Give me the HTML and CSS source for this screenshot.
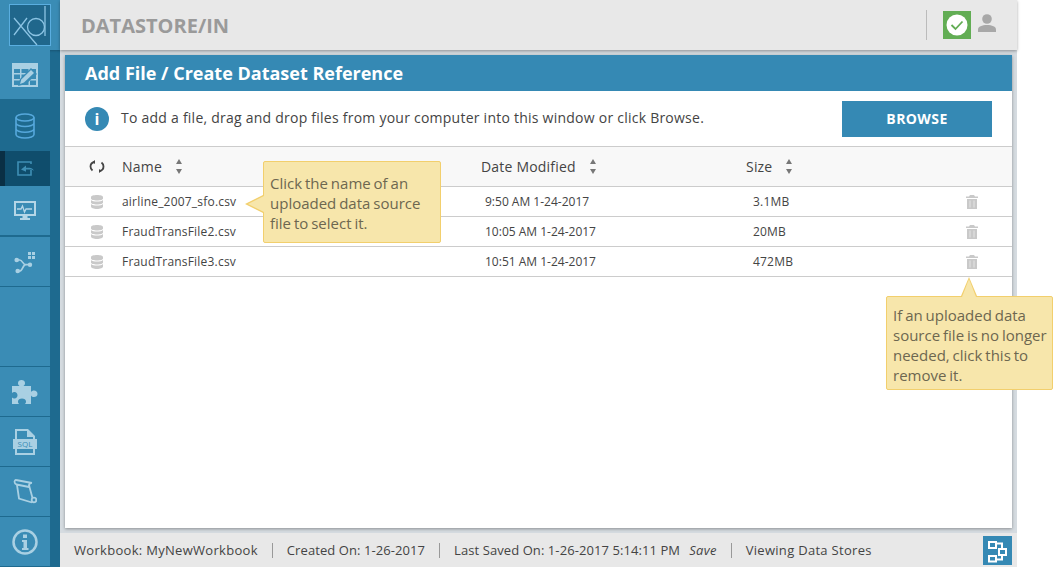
FILE: index.html
```html
<!DOCTYPE html>
<html>
<head>
    <meta charset="utf-8">
    <title>Datastore/In</title>
    <link rel="stylesheet" href="styles.css">
</head>
<body>
<div class="app">
    <!-- Barre de navigation -->
    <nav class="sidebar">
        <div class="logo">
            <div class="logo-box">
                <svg width="42" height="42" viewBox="0 0 42 42" fill="none" stroke="#8cc4e4" stroke-width="1.3">
                    <path d="M5 14 L28 41 M5 31 L18 14"/>
                    <circle cx="27" cy="23" r="8.500"/>
                    <path d="M36 2 V32"/>
                </svg>
            </div>
        </div>
        <div class="nav-list nav-top">
            <a class="nav-item">
                <svg width="26" height="26" viewBox="0 0 26 26">
                    <path fill="#a9d0e3" d="M0 1h26v24H0z"/>
                    <path fill="#3a8cb5" d="M2 7h6v4H2zM9.500 7h7v4h-7zM18 7h6v4h-6zM2 12.500h6V17H2zM9.500 12.500h7V17h-7zM18 12.500h6V17h-6zM2 18.500h6V23H2zM9.500 18.500h7V23h-7zM18 18.500h6V23h-6z"/>
                    <path fill="#3a8cb5" d="M6 24l2-7L19 6l6 6-11 10z"/>
                    <path fill="#a9d0e3" d="M8 22l1.300-4.500L19 8l3 3-10 9.500z"/>
                </svg>
            </a>
            <a class="nav-item nav-active">
                <svg width="20" height="26" viewBox="0 0 20 26" fill="none" stroke="#56a8dc" stroke-width="1.600">
                    <ellipse cx="10" cy="4.500" rx="9" ry="3.500"/>
                    <path d="M1 4.500v17c0 2 4 3.500 9 3.500s9-1.500 9-3.500v-17M1 10c0 2 4 3.500 9 3.500s9-1.500 9-3.500M1 15.800c0 2 4 3.500 9 3.500s9-1.500 9-3.500"/>
                </svg>
            </a>
            <a class="nav-sub">
                <svg width="17" height="15" viewBox="0 0 17 15" fill="none" stroke="#3f8fb5" stroke-width="1.600">
                    <path d="M14 9v5H1V1h13v2"/>
                    <path fill="#3f8fb5" stroke="none" d="M4 8.500l5-4v2.300h3.500c1.800 0 3.500 1 4.500 3-1.300-1-2.600-1.300-4.200-1.300H9v2.200z"/>
                </svg>
            </a>
            <a class="nav-item">
                <svg width="22" height="20" viewBox="0 0 22 20">
                    <path fill="#b5d6e7" d="M0 0h22v15H13.500v2H16v2H6v-2h2.500v-2H0z"/>
                    <path fill="#3a8cb5" d="M2 2h18v11H2z"/>
                    <path fill="none" stroke="#b5d6e7" stroke-width="1.300" d="M3 8h4l1.500-3 2 6 1.500-3h6"/>
                </svg>
            </a>
            <a class="nav-item">
                <svg width="22" height="24" viewBox="0 0 22 24" fill="#a9d0e3">
                    <circle cx="2.700" cy="10" r="2.300"/><circle cx="3.700" cy="21" r="2.300"/><circle cx="16" cy="14.700" r="2.200"/>
                    <path fill="none" stroke="#a9d0e3" stroke-width="1.700" d="M2.700 10h3c3 0 3 4.700 6 4.700h4M3.700 21h2c3 0 3-6.300 6-6.300"/>
                    <path d="M14 2h3v3h-3zM18 2h3v3h-3zM14 6h3v3h-3zM18 6h3v3h-3z"/>
                </svg>
            </a>
        </div>
        <div class="nav-list nav-bottom">
            <a class="nav-item">
                <svg width="26" height="24" viewBox="0 0 26 24" fill="#a9d0e3">
                    <path d="M0 6h7.500c-1-1-1.500-1.500-1.500-3 0-2 1.500-3 3.500-3S13 1 13 3c0 1.500-.5 2-1.500 3H19v6c1-1 1.500-1.500 3-1.500 2 0 3.500 1.500 3.500 3.500S24 17 22 17c-1.500 0-2-.5-3-1.500V24h-6c.8-1 1-1.500 1-2.500 0-2-1.800-3-4-3s-4 1-4 3c0 1 .2 1.500 1 2.500H0v-6.500c1 .8 1.500 1 2.500 1 1.800 0 3-1.300 3-3.200s-1.200-3.300-3-3.300c-1 0-1.500.2-2.500 1z"/>
                </svg>
            </a>
            <a class="nav-item">
                <svg width="24" height="26" viewBox="0 0 24 26">
                    <path fill="#a9d0e3" d="M2 0h13l7 7v19H2z"/>
                    <path fill="#3a8cb5" d="M4 2h10v6h6v2H4zM4 20h16v4H4z"/>
                    <path fill="#a9d0e3" d="M0 10h24v10H0z"/>
                    <text x="12" y="18" text-anchor="middle" class="sql-label">SQL</text>
                </svg>
            </a>
            <a class="nav-item">
                <svg width="24" height="26" viewBox="0 0 24 26" fill="none" stroke="#a9d0e3" stroke-width="1.800">
                    <path d="M3 1L19 4M3 1C1 1 1 5 3.500 5.500L16 8M17.500 4C16 5 16 7 16.500 8L19.500 19M4 6L6 19.500L19 23.500"/>
                    <circle cx="21" cy="21" r="2.300"/>
                </svg>
            </a>
            <a class="nav-item">
                <svg width="26" height="26" viewBox="0 0 26 26">
                    <circle cx="13" cy="13" r="11.500" fill="none" stroke="#a9d0e3" stroke-width="2.500"/>
                    <path fill="#a9d0e3" d="M11 5.500h4v3.500h-4zM10 11h5v8h1.500v2h-6.500v-2h1.500v-6h-1.500z"/>
                </svg>
            </a>
        </div>
    </nav>

    <div class="main">
        <!-- En-tête -->
        <header class="topbar">
            <h1 class="page-title">DATASTORE/IN</h1>
            <div class="topbar-right">
                <span class="status-ok">
                    <svg width="22" height="22" viewBox="0 0 22 22">
                        <circle cx="11" cy="11" r="10.500" fill="#fff"/>
                        <path d="M5.500 11l4 4 7-7.500" fill="none" stroke="#62ad54" stroke-width="1.800"/>
                    </svg>
                </span>
                <svg class="user-icon" width="18" height="18" viewBox="0 0 18 18" fill="#a8a8a8">
                    <circle cx="9" cy="5" r="4.800"/>
                    <path d="M0 18v-2.500C0 12.500 4 11 9 11s9 1.500 9 4.500V18z"/>
                </svg>
            </div>
        </header>

        <section class="panel">
            <div class="panel-title">Add File / Create Dataset Reference</div>
            <div class="intro">
                <span class="info-dot">i</span>
                <span class="intro-text">To add a file, drag and drop files from your computer into this window or click Browse.</span>
                <button class="browse">BROWSE</button>
            </div>

            <div class="row head">
                <span class="cell-icon">
                    <svg width="16" height="13" viewBox="0 0 16 13" fill="none" stroke="#444" stroke-width="1.800">
                        <path d="M5.500 2C3 2.500 1.500 4 1.500 6.500c0 1.500.7 3 2 4M10.500 11c2.500-.5 4-2 4-4.500 0-1.500-.7-3-2-4"/>
                        <path fill="#444" stroke="none" d="M6 0v4L3.500 2zM10 13V9l2.500 2z"/>
                    </svg>
                </span>
                <span class="sort">Name <i class="arrows"></i></span>
                <span class="sort">Date Modified <i class="arrows"></i></span>
                <span class="sort">Size <i class="arrows"></i></span>
                <span></span>
            </div>

            <div class="row">
                <span class="cell-icon"><svg class="db-icon" width="12" height="14"><use href="#db"/></svg></span>
                <span>airline_2007_sfo.csv</span>
                <span class="cell-date">9:50 AM 1-24-2017</span>
                <span class="cell-size">3.1MB</span>
                <span class="cell-trash"><svg width="12" height="14"><use href="#trash"/></svg></span>
            </div>
            <div class="row">
                <span class="cell-icon"><svg class="db-icon" width="12" height="14"><use href="#db"/></svg></span>
                <span>FraudTransFile2.csv</span>
                <span class="cell-date">10:05 AM 1-24-2017</span>
                <span class="cell-size">20MB</span>
                <span class="cell-trash"><svg width="12" height="14"><use href="#trash"/></svg></span>
            </div>
            <div class="row">
                <span class="cell-icon"><svg class="db-icon" width="12" height="14"><use href="#db"/></svg></span>
                <span>FraudTransFile3.csv</span>
                <span class="cell-date">10:51 AM 1-24-2017</span>
                <span class="cell-size">472MB</span>
                <span class="cell-trash"><svg width="12" height="14"><use href="#trash"/></svg></span>
            </div>
        </section>

        <!-- Barre d'état -->
        <footer class="statusbar">
            <span>Workbook: MyNewWorkbook</span>
            <span class="sep"></span>
            <span class="stat-tight">Created On: 1-26-2017</span>
            <span class="sep"></span>
            <span class="stat-tight">Last Saved On: 1-26-2017 5:14:11 PM</span>
            <em class="save">Save</em>
            <span class="sep"></span>
            <span>Viewing Data Stores</span>
            <span class="map-btn">
                <svg width="21" height="26" viewBox="0 0 21 26" fill="none" stroke="#fff" stroke-width="2">
                    <path d="M2 5h7v6H2zM12 12h7v6h-7zM2 19h7v5.500H2zM9 6.500h6v5.500M15 18v4.500H9"/>
                </svg>
            </span>
        </footer>
    </div>

    <!-- Bulles d'aide -->
    <div class="tip tip-left">Click the name of an uploaded data source file to select it.</div>
    <div class="tip tip-up">If an uploaded data source file is no longer needed, click this to remove it.</div>
</div>

<svg class="defs" width="0" height="0">
    <symbol id="db" viewBox="0 0 12 14">
        <path fill="#c9c9c9" d="M0 2c0-1.200 2.700-2 6-2s6 .8 6 2v1.500c0 1.200-2.700 2-6 2s-6-.8-6-2zM0 5c1 1 3.500 1.500 6 1.500S11 6 12 5v2.500c0 1.200-2.700 2-6 2s-6-.8-6-2zM0 9c1 1 3.500 1.500 6 1.500S11 10 12 9v2.500c0 1.500-2.700 2.500-6 2.500s-6-1-6-2.500z"/>
    </symbol>
    <symbol id="trash" viewBox="0 0 12 14">
        <path fill="#c9c9c9" d="M4 0h4l1 1.500h3V3H0V1.500h3zM1 4h10v10H1z"/>
        <path fill="#e6e6e6" d="M3.500 5.500h1v7h-1zM7.500 5.500h1v7h-1z"/>
    </symbol>
</svg>
</body>
</html>
```

FILE: styles.css
```css
* {
  box-sizing: border-box;
}

html, body {
  margin: 0;
  height: 100%;
  background-color: #fff;
  overflow: hidden;
}

body {
  font-family: "Open Sans", Arial, sans-serif;
  font-size: 13px;
  color: #444;
}

.defs {
  position: absolute;
}

.app {
  position: relative;
  display: flex;
  width: 1017px;
  height: 567px;
}

/* Barre de navigation */
.sidebar {
  display: flex;
  flex-direction: column;
  flex: 0 0 60px;
  height: 567px;
  background-color: #1e6a8f;
}

.logo {
  display: flex;
  justify-content: center;
  height: 50px;
  padding: 4px 0 0 0;
  background-color: #3a8cb5;
  box-shadow: 0 1px 2px rgba(0, 0, 0, 0.2);
}

.logo-box {
  width: 42px;
  height: 42px;
  border: 1px solid #5aaee0;
  background-color: #20678c;
  margin-left: -1px;
}

.logo-box svg {
  display: block;
  margin: -1px;
}

.nav-list {
  display: flex;
  flex-direction: column;
  width: 50px;
}

.nav-top {
  flex: 1;
  background-color: #3a8cb5;
}

.nav-bottom {
  border-top: 1px solid #1e6a8f;
}

.nav-item {
  display: flex;
  align-items: center;
  justify-content: center;
  height: 50px;
  background-color: #3a8cb5;
  border-bottom: 1px solid #1e6a8f;
}

.nav-active {
  background-color: #1e6a8f;
  border-bottom: none;
  height: 51px;
}

.nav-sub {
  display: flex;
  align-items: center;
  justify-content: center;
  height: 35px;
  background-color: #0f4d6c;
  border-left: 5px solid #0a2f44;
  padding-right: 5px;
}

.nav-list .nav-sub + .nav-item {
  height: 51px;
  border-bottom-width: 2px;
}

.sql-label {
  font-family: "Open Sans", Arial, sans-serif;
  font-size: 8px;
  fill: #3a8cb5;
}

/* Zone principale */
.main {
  display: flex;
  flex-direction: column;
  flex: 1;
  min-width: 0;
  background-color: #d5dbe0;
}

.topbar {
  display: flex;
  align-items: center;
  justify-content: space-between;
  flex: 0 0 50px;
  padding: 0 21px 0 21px;
  background-color: #e8e8e8;
  box-shadow: 0 1px 3px rgba(0, 0, 0, 0.35);
  position: relative;
}

.page-title {
  margin: 0;
  font-size: 20px;
  font-weight: 700;
  color: #9a9a9a;
}

.topbar-right {
  display: flex;
  align-items: center;
  height: 30px;
  border-left: 1px solid #bbb;
  padding-left: 16px;
}

.status-ok {
  display: flex;
  align-items: center;
  justify-content: center;
  width: 28px;
  height: 28px;
  background-color: #62ad54;
}

.user-icon {
  margin-left: 7px;
  margin-top: -4px;
}

.panel {
  flex: 1;
  margin: 5px 5px 5px 5px;
  background-color: #fff;
  box-shadow: 0 1px 3px rgba(0, 0, 0, 0.35);
}

.panel-title {
  height: 36px;
  padding: 0 20px;
  line-height: 36px;
  font-size: 18px;
  font-weight: 700;
  color: #fff;
  background-color: #3589b4;
}

.intro {
  display: flex;
  align-items: center;
  height: 56px;
  padding: 0 20px;
  border-bottom: 1px solid #ccc;
}

.info-dot {
  display: flex;
  align-items: center;
  justify-content: center;
  width: 24px;
  height: 24px;
  border-radius: 50%;
  background-color: #3589b4;
  color: #fff;
  font-weight: 700;
  font-size: 16px;
}

.intro-text {
  margin: 0 0 2px 12px;
  font-size: 14px;
  letter-spacing: 0.24px;
  color: #444;
}

.browse {
  margin-left: auto;
  width: 150px;
  height: 36px;
  border: none;
  background-color: #3589b4;
  color: #fff;
  font-family: "Open Sans", Arial, sans-serif;
  font-size: 14px;
  font-weight: 700;
  letter-spacing: 0.4px;
}

/* Tableau des fichiers */
.row {
  display: grid;
  grid-template-columns: 57px 359px 265px 1fr 80px;
  align-items: center;
  height: 30px;
  border-bottom: 1px solid #ccc;
  font-size: 12px;
  letter-spacing: 0.2px;
}

.head {
  height: 40px;
  font-size: 14px;
  background-color: #f8f8f8;
}

.cell-icon {
  display: flex;
  justify-content: center;
  padding-left: 7px;
}

.cell-date {
  padding-left: 4px;
  letter-spacing: 0;
}

.cell-size {
  padding-left: 7px;
}

.cell-trash {
  display: flex;
  justify-content: flex-end;
  padding-right: 34px;
}

.sort {
  display: flex;
  align-items: center;
}

.arrows {
  position: relative;
  width: 7px;
  height: 15px;
  margin-left: 14px;
}

.arrows::before, .arrows::after {
  content: "";
  position: absolute;
  left: 0;
  border-left: 3.500px solid transparent;
  border-right: 3.500px solid transparent;
}

.arrows::before {
  top: 0;
  border-bottom: 5px solid #777;
}

.arrows::after {
  bottom: 0;
  border-top: 5px solid #777;
}

/* Barre d'état */
.statusbar {
  display: flex;
  align-items: center;
  flex: 0 0 34px;
  padding: 0 5px 0 14px;
  letter-spacing: 0.3px;
  background-color: #e8e8e8;
}

.stat-tight {
  letter-spacing: 0.08px;
}

.sep {
  width: 1px;
  height: 15px;
  margin: 0 14px;
  background-color: #999;
}

.save {
  margin-left: 9px;
}

.map-btn {
  display: flex;
  align-items: center;
  justify-content: center;
  width: 29px;
  height: 29px;
  margin-left: auto;
  background-color: #3589b4;
}

/* Bulles d'aide */
.tip {
  position: absolute;
  background-color: #f7e6ab;
  border: 1px solid #f2cf6d;
  border-radius: 2px;
  font-size: 15px;
  line-height: 20px;
  color: #6d6750;
  word-spacing: -1px;
}

.tip-left {
  left: 263px;
  top: 161px;
  width: 178px;
  height: 82px;
  padding: 11px 6px;
}

.tip-up {
  left: 886px;
  top: 296px;
  width: 167px;
  height: 94px;
  padding: 8px 0 8px 6px;
}

.tip::before, .tip::after {
  content: "";
  position: absolute;
}

.tip-left::before {
  left: -19px;
  top: 33px;
  border: 9px solid transparent;
  border-right: 18px solid #f2cf6d;
  border-left: 0;
  margin-left: 0;
}

.tip-left::after {
  left: -16px;
  top: 34px;
  border: 8px solid transparent;
  border-right: 16px solid #f7e6ab;
  border-left: 0;
}

.tip-up::before {
  left: 74px;
  top: -20px;
  border: 8px solid transparent;
  border-bottom: 19px solid #f2cf6d;
  border-top: 0;
}

.tip-up::after {
  left: 75px;
  top: -18px;
  border: 7px solid transparent;
  border-bottom: 18px solid #f7e6ab;
  border-top: 0;
}
```
